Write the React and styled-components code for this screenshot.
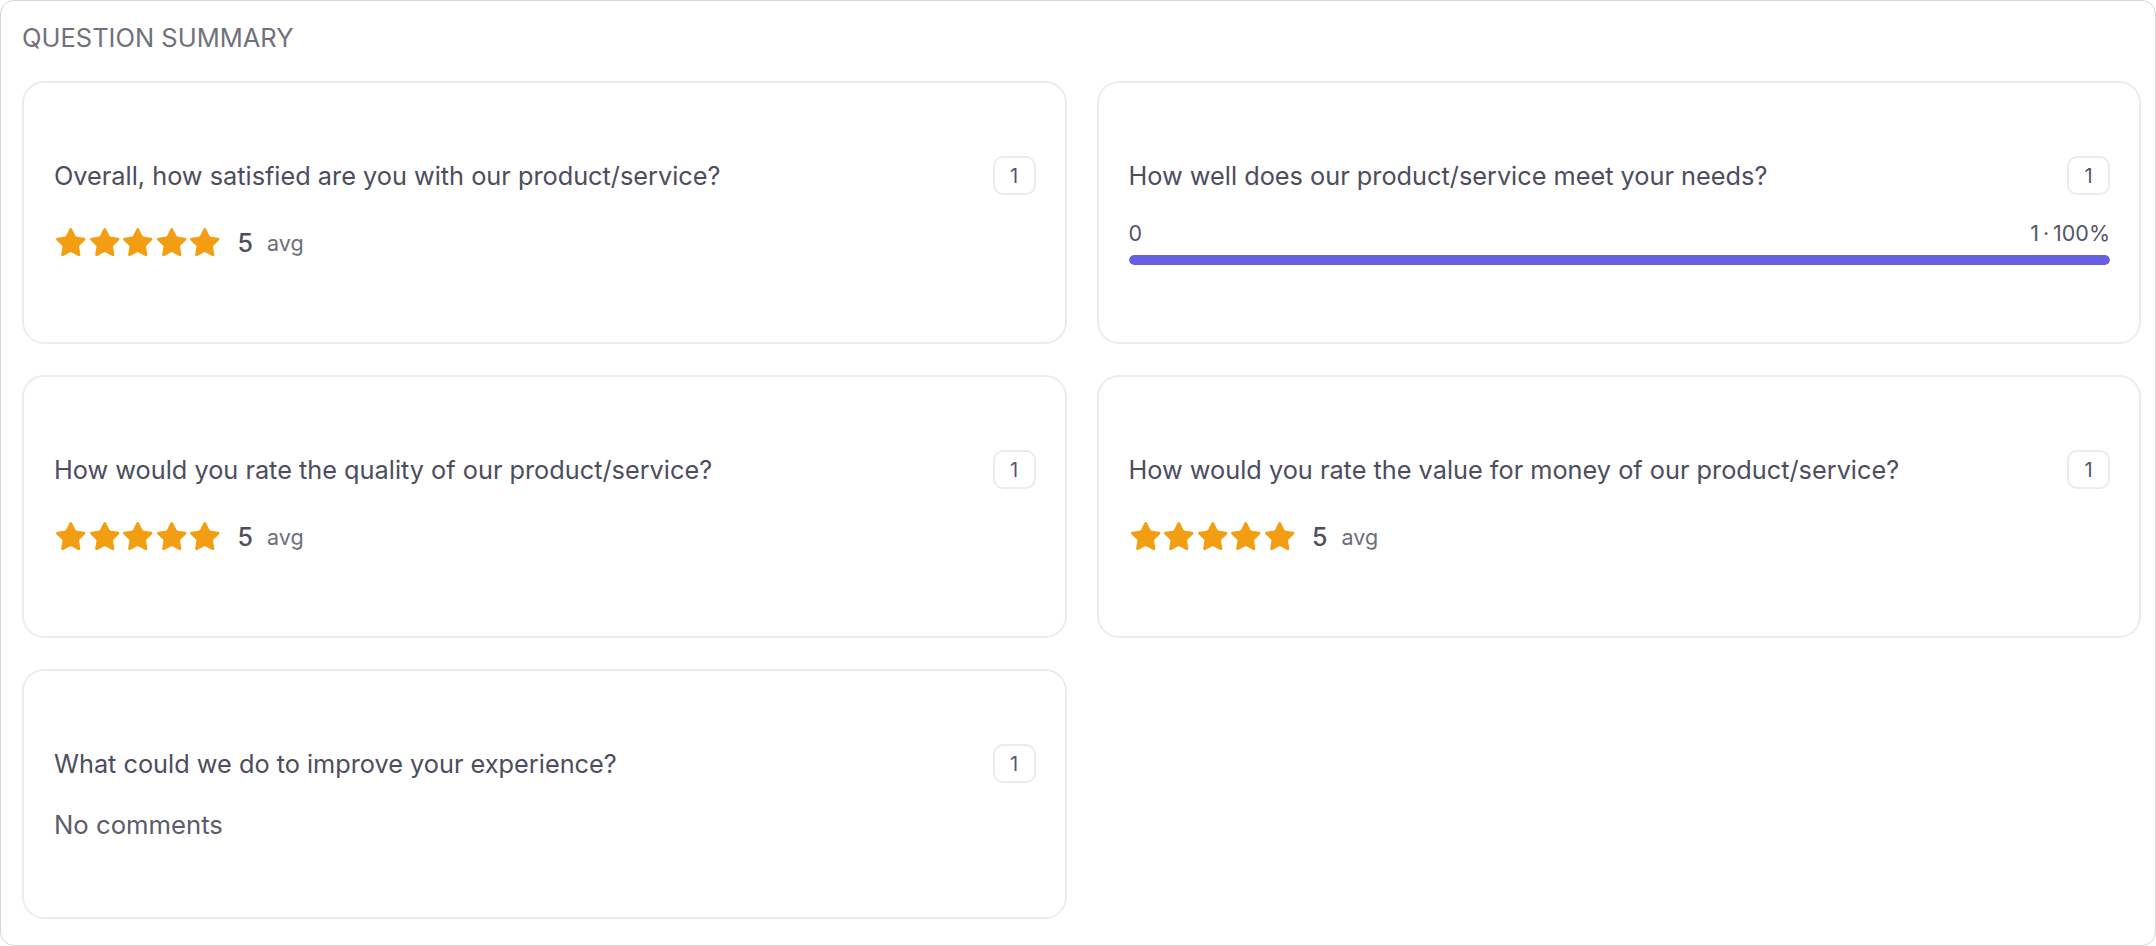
import React from 'react';
import styled, { createGlobalStyle } from 'styled-components';
import { Star } from 'lucide-react';

const GlobalStyle = createGlobalStyle`
  * { box-sizing: border-box; }
  html, body {
    margin: 0;
    padding: 0;
    background: #ffffff;
    font-family: Inter, "Noto Sans", "Liberation Sans", sans-serif;
  }
`;

const Panel = styled.section`
  height: 946px;
  border: 1px solid #d6d6d9;
  border-radius: 14px;
  padding: 21px 14px 0 21px;
  background: #fff;
`;

const Title = styled.h2`
  margin: 0;
  font-size: 25.5px;
  line-height: 32px;
  font-weight: 400;
  color: #71717c;
`;

const Grid = styled.div`
  margin-top: 27px;
  display: grid;
  grid-template-columns: 1fr 1fr;
  column-gap: 30px;
  row-gap: 31px;
`;

const Card = styled.article`
  border: 2px solid #ececee;
  border-radius: 22px;
  padding: 73px 29px 77px 30px;
  background: #fff;
`;

const Header = styled.div`
  display: flex;
  align-items: center;
  justify-content: space-between;
  gap: 24px;
`;

const Question = styled.p`
  margin: 0;
  font-size: 25.3px;
  line-height: 34px;
  color: #4d4d5e;
`;

const Badge = styled.span`
  flex: none;
  width: 43px;
  height: 39px;
  border: 2px solid #ececee;
  border-radius: 10px;
  display: flex;
  align-items: center;
  justify-content: center;
  font-size: 20px;
  color: #55556a;
`;

const StarsBody = styled.div`
  margin-top: 33px;
  padding-bottom: 8px;
  display: flex;
  align-items: center;
  height: 37px;
`;

const Stars = styled.div`
  display: flex;
  color: #f39e12;
`;

const AvgValue = styled.span`
  margin-left: 16px;
  font-size: 25px;
  font-weight: 500;
  color: #4d4d5e;
`;

const AvgLabel = styled.span`
  margin-left: 14px;
  font-size: 21.5px;
  color: #6d6d7a;
`;

const ScaleBody = styled.div`
  margin-top: 24px;
`;

const ScaleLabels = styled.div`
  display: flex;
  justify-content: space-between;
  font-size: 21.5px;
  line-height: 28px;
  color: #55556a;
`;

const Track = styled.div`
  margin-top: 8px;
  height: 10px;
  border-radius: 5px;
  background: #eeeef2;
  overflow: hidden;
`;

const Fill = styled.div`
  height: 100%;
  border-radius: 5px;
  background: #6560e2;
`;

const Comment = styled.p`
  margin: 27px 0 0;
  font-size: 25.7px;
  line-height: 30px;
  color: #5c5c6a;
`;

const questions = [
  { id: 1, text: 'Overall, how satisfied are you with our product/service?', type: 'rating', avg: 5, count: 1 },
  { id: 2, text: 'How well does our product/service meet your needs?', type: 'scale', low: 0, count: 1, pct: 100 },
  { id: 3, text: 'How would you rate the quality of our product/service?', type: 'rating', avg: 5, count: 1 },
  { id: 4, text: 'How would you rate the value for money of our product/service?', type: 'rating', avg: 5, count: 1 },
  { id: 5, text: 'What could we do to improve your experience?', type: 'text', count: 1 },
];

const RatingSummary = ({ avg }) => (
  <StarsBody>
    <Stars>
      {[0, 1, 2, 3, 4].map(i => (
        <Star key={i} size={33.5} fill="currentColor" strokeWidth={1} />
      ))}
    </Stars>
    <AvgValue>{avg}</AvgValue>
    <AvgLabel>avg</AvgLabel>
  </StarsBody>
);

const ScaleSummary = ({ low, count, pct }) => (
  <ScaleBody>
    <ScaleLabels>
      <span>{low}</span>
      <span>{count}&thinsp;·&thinsp;{pct}%</span>
    </ScaleLabels>
    <Track>
      <Fill style={{ width: `${pct}%` }} />
    </Track>
  </ScaleBody>
);

const QuestionCard = ({ q }) => (
  <Card>
    <Header>
      <Question>{q.text}</Question>
      <Badge>{q.count}</Badge>
    </Header>
    {q.type === 'rating' && <RatingSummary avg={q.avg} />}
    {q.type === 'scale' && <ScaleSummary low={q.low} count={q.count} pct={q.pct} />}
    {q.type === 'text' && <Comment>No comments</Comment>}
  </Card>
);

export default function App() {
  return (
    <>
      <GlobalStyle />
      <Panel>
        <Title>QUESTION SUMMARY</Title>
        <Grid>
          {questions.map(q => (
            <QuestionCard key={q.id} q={q} />
          ))}
        </Grid>
      </Panel>
    </>
  );
}
